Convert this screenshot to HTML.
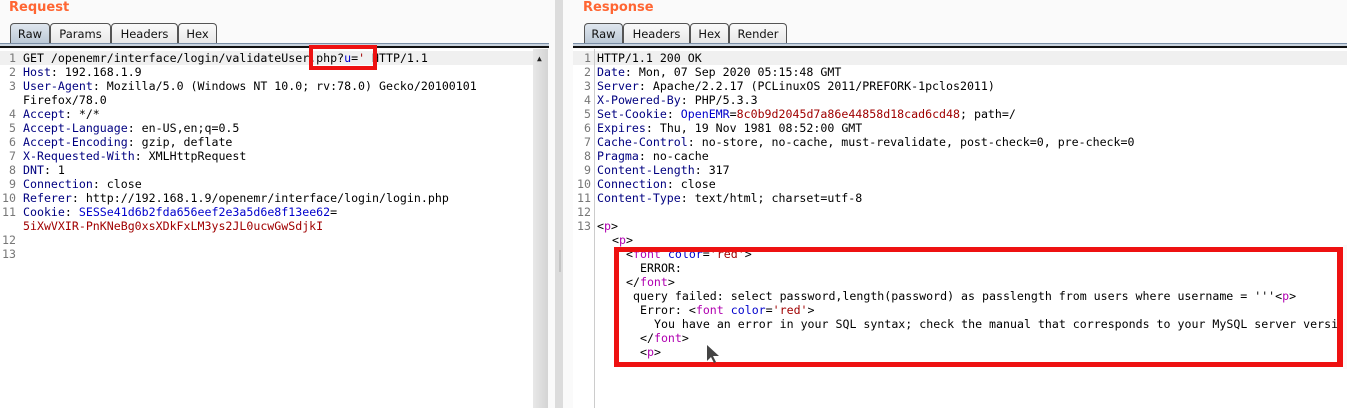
<!DOCTYPE html>
<html><head><meta charset="utf-8"><style>
*{margin:0;padding:0;box-sizing:border-box}
body{width:1347px;height:408px;background:#fafafa;position:relative;overflow:hidden;font-family:"DejaVu Sans Mono","Liberation Mono",monospace;font-size:11.6px}
.t{position:absolute;font-family:"DejaVu Sans","Liberation Sans",sans-serif;font-weight:bold;color:#ff6633;font-size:13px;top:0px}
.tab{position:absolute;top:23px;height:22px;border:1px solid #555;border-bottom:none;border-radius:4px 4px 0 0;background:linear-gradient(#fafafa,#e6e6e6);font-family:"DejaVu Sans","Liberation Sans",sans-serif;font-size:11.5px;line-height:21px;text-align:center;color:#111}
.tab.a{background:linear-gradient(#dfe6ee,#b8c6d4)}
.bar{position:absolute;top:43px;height:5px;border-top:1px solid #7a8ea6;border-bottom:2px solid #111;background:#c9d3de}
.ed{position:absolute;top:49px;bottom:0;background:#fff}
.l{position:absolute;white-space:pre;line-height:14px;color:#000}
.n{position:absolute;white-space:pre;line-height:14px;color:#777;text-align:right}
.h{color:#000080}.b{color:#0000cc}.r{color:#a00000}.m{color:#b000b0}
.box{position:absolute;border:solid #ee1111}
</style></head><body>
<div class="t" style="left:9px">Request</div>
<div class="t" style="left:583px">Response</div>
<div class="tab a" style="left:10px;width:40px">Raw</div>
<div class="tab" style="left:50px;width:61px">Params</div>
<div class="tab" style="left:111px;width:67px">Headers</div>
<div class="tab" style="left:178px;width:39px">Hex</div>
<div class="bar" style="left:0;width:549px"></div>
<div class="tab a" style="left:584px;width:39px">Raw</div>
<div class="tab" style="left:623px;width:67px">Headers</div>
<div class="tab" style="left:690px;width:39px">Hex</div>
<div class="tab" style="left:729px;width:58px">Render</div>
<div class="bar" style="left:573px;width:774px"></div>

<div class="ed" style="left:0;width:533px"></div>
<div style="position:absolute;left:0;top:51px;width:533px;height:14px;background:#f0f0f0"></div>
<div style="position:absolute;left:533px;top:49px;width:15px;bottom:0;background:linear-gradient(90deg,#e8e8e8,#d4d4d4)"></div>
<div style="position:absolute;left:537px;top:54px;font-size:8px;color:#222">▲</div>
<div style="position:absolute;left:555px;top:0;width:8px;bottom:0;background:#dcdcdc"></div>
<div style="position:absolute;left:559px;top:250px;width:2px;height:22px;background:#c4c4c4"></div>

<div class="ed" style="left:573px;right:0"></div>
<div style="position:absolute;left:573px;top:51px;right:0;height:14px;background:#f0f0f0"></div>
<div style="position:absolute;left:594px;top:49px;width:1px;bottom:0;background:#ccc"></div>

<div style="position:absolute;left:0;top:51px">
<div class="n" style="left:0;width:16px;top:0">1<br>2<br>3<br><br>4<br>5<br>6<br>7<br>8<br>9<br>10<br>11<br><br>12<br>13</div>
<div class="l" style="left:23px;top:0">GET /openemr/interface/login/validateUser.php?<span class="b">u</span>=<span class="r">'</span> HTTP/1.1
<span class="h">Host</span>: 192.168.1.9
<span class="h">User-Agent</span>: Mozilla/5.0 (Windows NT 10.0; rv:78.0) Gecko/20100101
Firefox/78.0
<span class="h">Accept</span>: */*
<span class="h">Accept-Language</span>: en-US,en;q=0.5
<span class="h">Accept-Encoding</span>: gzip, deflate
<span class="h">X-Requested-With</span>: XMLHttpRequest
<span class="h">DNT</span>: 1
<span class="h">Connection</span>: close
<span class="h">Referer</span>: http://192.168.1.9/openemr/interface/login/login.php
<span class="h">Cookie</span>: <span class="b">SESSe41d6b2fda656eef2e3a5d6e8f13ee62</span>=
<span class="r">5iXwVXIR-PnKNeBg0xsXDkFxLM3ys2JL0ucwGwSdjkI</span></div>
</div>

<div style="position:absolute;left:0;top:51px">
<div class="n" style="left:573px;width:18px;top:0">1<br>2<br>3<br>4<br>5<br>6<br>7<br>8<br>9<br>10<br>11<br>12<br>13</div>
<div class="l" style="left:597px;top:0">HTTP/1.1 200 OK
<span class="h">Date</span>: Mon, 07 Sep 2020 05:15:48 GMT
<span class="h">Server</span>: Apache/2.2.17 (PCLinuxOS 2011/PREFORK-1pclos2011)
<span class="h">X-Powered-By</span>: PHP/5.3.3
<span class="h">Set-Cookie</span>: <span class="b">OpenEMR</span>=<span class="r">8c0b9d2045d7a86e44858d18cad6cd48</span>; path=/
<span class="h">Expires</span>: Thu, 19 Nov 1981 08:52:00 GMT
<span class="h">Cache-Control</span>: no-store, no-cache, must-revalidate, post-check=0, pre-check=0
<span class="h">Pragma</span>: no-cache
<span class="h">Content-Length</span>: 317
<span class="h">Connection</span>: close
<span class="h">Content-Type</span>: text/html; charset=utf-8

&lt;<span class="m">p</span>&gt;</div>
<div class="l" style="left:612px;top:182px">&lt;<span class="m">p</span>&gt;</div>
<div class="l" style="left:626px;top:196px">&lt;<span class="m">font</span> <span class="b">color</span>=<span class="r">'red'</span>&gt;</div>
<div class="l" style="left:640px;top:210px">ERROR:</div>
<div class="l" style="left:626px;top:224px">&lt;/<span class="m">font</span>&gt;</div>
<div class="l" style="left:633px;top:238px">query failed: select password,length(password) as passlength from users where username = '''&lt;<span class="m">p</span>&gt;</div>
<div class="l" style="left:640px;top:252px">Error: &lt;<span class="m">font</span> <span class="b">color</span>=<span class="r">'red'</span>&gt;</div>
<div class="l" style="left:654px;top:266px">You have an error in your SQL syntax; check the manual that corresponds to your MySQL server version</div>
<div class="l" style="left:640px;top:280px">&lt;/<span class="m">font</span>&gt;</div>
<div class="l" style="left:640px;top:294px">&lt;<span class="m">p</span>&gt;</div>
</div>

<div class="box" style="left:309px;top:45px;width:68px;height:25px;border-width:4px"></div>
<div class="box" style="left:614px;top:247px;width:729px;height:120px;border-width:5px 0 5px 5px;border-right:0"></div>
<div style="position:absolute;left:1337px;top:247px;width:6px;height:120px;background:#ee1111"></div>
<div style="position:absolute;left:1343px;top:245px;width:4px;height:124px;background:#fafafa"></div>
<svg style="position:absolute;left:706px;top:344px" width="16" height="20"><path d="M1 1 L1 17 L5 13 L8 19 L10 18 L7 12 L13 12 Z" fill="#444"/></svg>
</body></html>
